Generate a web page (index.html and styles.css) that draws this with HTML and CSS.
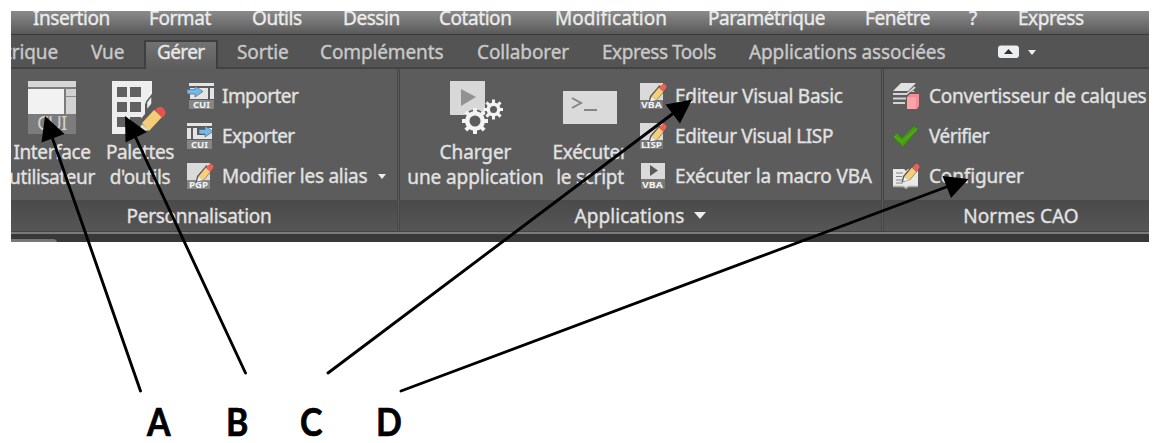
FILE: index.html
```html
<!DOCTYPE html>
<html lang="fr">
<head>
    <meta charset="UTF-8">
    <meta name="viewport" content="width=device-width, initial-scale=1.0">
    <title>Onglet Gérer</title>
    <link rel="stylesheet" href="styles.css">
</head>
<body>
    <svg class="defs" width="0" height="0">
        <defs>
            <!-- Pencil shared by the edit icons -->
            <g id="pencil">
                <path d="M10 14 L19.500 3 L25 8.500 L17 18 L8.500 20.500 Z" fill="#5c5c5c"/>
                <path d="M11.500 14.500 L19 5.500 L23.500 9.500 L16.500 18 Z" fill="#f7cf77"/>
                <path d="M11.500 14.500 L16.500 18 L10 19.500 Z" fill="#eee"/>
                <path d="M19 6 L22 2.500 Q23.500 1 25.500 2.800 Q27.500 4.500 26 6.300 L23 9.800 Z" fill="#ea6257"/>
            </g>
            <path id="bigTeeth" d="M-2 -13h4v26h-4zM-13 -2h26v4h-26z"/>
            <path id="smallTeeth" d="M-1.500 -10h3v20h-3zM-10 -1.500h20v3h-20z"/>
        </defs>
    </svg>
    <div class="app">
        <nav class="menu">
            <span>Insertion</span>
            <span>Format</span>
            <span>Outils</span>
            <span>Dessin</span>
            <span>Cotation</span>
            <span class="wide">Modification</span>
            <span>Paramétrique</span>
            <span>Fenêtre</span>
            <span>?</span>
            <span>Express</span>
        </nav>
        <div class="tabs">
            <span class="tab cut">trique</span>
            <span class="tab">Vue</span>
            <span class="tab active">Gérer</span>
            <span class="tab">Sortie</span>
            <span class="tab">Compléments</span>
            <span class="tab">Collaborer</span>
            <span class="tab tight">Express Tools</span>
            <span class="tab">Applications associées</span>
            <span class="tab-toggle">
                <svg width="44" height="16" viewBox="0 0 44 16">
                    <rect x="1" y="1.500" width="21" height="12.500" rx="3" fill="#eceef2"/>
                    <path d="M7 10 L11.500 5 L16 10 Z" fill="#333"/>
                    <path d="M31 6 H39 L35 11 Z" fill="#eee"/>
                </svg>
            </span>
        </div>
        <div class="ribbon">
            <section class="panel custom">
                <div class="panel-body">
                    <div class="big interface">
                        <svg width="50" height="56" viewBox="0 0 50 56">
                            <rect x="1" y="1" width="48" height="53" fill="#7c7c7c"/>
                            <rect x="1" y="1" width="48" height="6" fill="#d6d6d6"/>
                            <rect x="1" y="9" width="36" height="25" fill="#f2f2f2"/>
                            <rect x="39" y="9" width="10" height="25" fill="#d2d2d2"/>
                            <rect x="39" y="16" width="10" height="1" fill="#8a8a8a"/>
                            <text x="10" y="50" class="cui-label" textLength="30">CUI</text>
                        </svg>
                        <p>Interface<br>utilisateur</p>
                    </div>
                    <div class="big palettes">
                        <svg width="56" height="56" viewBox="0 0 56 56">
                            <path d="M1 1 H41 V16 L34 24 V34 L28 41 V54 H1 Z" fill="#eee"/>
                            <g fill="#606060">
                                <rect x="6" y="7" width="10" height="10"/>
                                <rect x="19" y="7" width="11" height="10"/>
                                <rect x="6" y="22" width="10" height="10"/>
                                <rect x="19" y="22" width="11" height="10"/>
                                <rect x="6" y="37" width="10" height="10"/>
                                <rect x="19" y="37" width="11" height="10"/>
                            </g>
                            <path d="M35.500 22 L41 15 V24 L35.500 31 Z" fill="#eee" stroke="#5c5c5c" stroke-width="1.500"/>
                            <path d="M26 53 L31 44 L38 50 Z" fill="#ddd"/>
                            <path d="M31 43 L43 30 L51 37 L38 51 Z" fill="#f3cd78"/>
                            <path d="M44 30 L46 28 Q50 25 53 29 Q56 33 53 36 L51 38 Z" fill="#e2564f"/>
                        </svg>
                        <p>Palettes<br>d'outils</p>
                    </div>
                    <ul class="list">
                        <li>
                            <svg width="28" height="28" viewBox="0 0 28 28">
                                <path d="M2 1h25v3h-25zM23 6h4v11h-4zM3 6h18v11h-18z" fill="#e4e4e4"/>
                                <rect x="2" y="18" width="25" height="9" fill="#858585"/>
                                <path d="M0 7.500 H8 V4 L16 9.500 L8 15 V12 H0 Z" fill="#6fb9ee" stroke="#4e5b66" stroke-width=".6"/>
                                <text x="6" y="26" class="tag" textLength="17" lengthAdjust="spacingAndGlyphs">CUI</text>
                            </svg>
                            <span class="tighter">Importer</span>
                        </li>
                        <li>
                            <svg width="28" height="28" viewBox="0 0 28 28">
                                <path d="M0 1h25v3h-25zM0 6h4v11h-4zM6 6h4v7h15v4h-19z" fill="#e4e4e4"/>
                                <path d="M20 6h5v10h-5z" fill="#e4e4e4"/>
                                <rect x="0" y="18" width="25" height="9" fill="#858585"/>
                                <path d="M12 7.500 H18 V4 L26 9.500 L18 15 V12 H12 Z" fill="#6fb9ee" stroke="#4e5b66" stroke-width=".6"/>
                                <text x="4" y="26" class="tag" textLength="17" lengthAdjust="spacingAndGlyphs">CUI</text>
                            </svg>
                            <span class="tighter">Exporter</span>
                        </li>
                        <li>
                            <svg width="28" height="28" viewBox="0 0 28 28">
                                <rect x="0" y="1" width="23" height="17" fill="#dadada"/>
                                <rect x="0" y="18" width="23" height="9" fill="#858585"/>
                                <use href="#pencil"/>
                                <text x="2" y="26" class="tag" textLength="19" lengthAdjust="spacingAndGlyphs">PGP</text>
                            </svg>
                            <span>Modifier les alias</span>
                            <i class="caret"></i>
                        </li>
                    </ul>
                </div>
                <div class="panel-title"><span>Personnalisation</span></div>
            </section>
            <section class="panel apps">
                <div class="panel-body">
                    <div class="big load">
                        <svg width="54" height="56" viewBox="0 0 54 56">
                            <rect x="1" y="1" width="35" height="34" fill="#d8d8d8"/>
                            <path d="M12 9 L27 17 L12 26 Z" fill="#929292"/>
                            <circle cx="26" cy="41" r="11.500" fill="#5c5c5c"/>
                            <g transform="translate(26 41)" fill="#f3f3f3">
                                <use href="#bigTeeth"/>
                                <use href="#bigTeeth" transform="rotate(45)"/>
                                <circle r="10"/>
                                <circle r="5.500" fill="#5c5c5c"/>
                            </g>
                            <g transform="translate(44.500 29.500)" fill="#f3f3f3">
                                <use href="#smallTeeth"/>
                                <use href="#smallTeeth" transform="rotate(45)"/>
                                <circle r="7"/>
                                <circle r="3.500" fill="#5c5c5c"/>
                            </g>
                        </svg>
                        <p>Charger<br>une application</p>
                    </div>
                    <div class="big script">
                        <svg width="54" height="56" viewBox="0 0 54 56">
                            <rect x="0" y="11" width="54" height="33" fill="#dadada"/>
                            <path d="M9 18 L18 23 L9 28 M21 30 H34" fill="none" stroke="#858585" stroke-width="2"/>
                        </svg>
                        <p>Exécuter<br>le script</p>
                    </div>
                    <ul class="list">
                        <li>
                            <svg width="28" height="28" viewBox="0 0 28 28">
                                <rect x="0" y="1" width="23" height="17" fill="#dadada"/>
                                <rect x="0" y="18" width="23" height="9" fill="#777"/>
                                <use href="#pencil"/>
                                <text x="1" y="26" class="tag" textLength="21" lengthAdjust="spacingAndGlyphs">VBA</text>
                            </svg>
                            <span>Editeur Visual Basic</span>
                        </li>
                        <li>
                            <svg width="28" height="28" viewBox="0 0 28 28">
                                <rect x="0" y="1" width="23" height="17" fill="#dadada"/>
                                <rect x="0" y="18" width="23" height="9" fill="#777"/>
                                <use href="#pencil"/>
                                <text x="1" y="26" class="tag" textLength="21" lengthAdjust="spacingAndGlyphs">LISP</text>
                            </svg>
                            <span class="tight">Editeur Visual LISP</span>
                        </li>
                        <li>
                            <svg width="28" height="28" viewBox="0 0 28 28">
                                <rect x="1" y="1" width="24" height="16" fill="#dadada"/>
                                <rect x="1" y="17" width="24" height="10" fill="#777"/>
                                <path d="M10 3 L18 8.500 L10 14 Z" fill="#5a5a5a"/>
                                <text x="2" y="26" class="tag" textLength="21" lengthAdjust="spacingAndGlyphs">VBA</text>
                            </svg>
                            <span class="loose">Exécuter la macro VBA</span>
                        </li>
                    </ul>
                </div>
                <div class="panel-title"><span class="wide">Applications</span><i class="caret large"></i></div>
            </section>
            <section class="panel norms">
                <div class="panel-body">
                    <ul class="list">
                        <li>
                            <svg width="28" height="28" viewBox="0 0 28 28">
                                <path d="M8 1 H23 L15 9 H0 Z" fill="#e2e2e2"/>
                                <path d="M0 12 H14 L22 5 M0 16.500 H13 L21 9 M0 21 H12" fill="none" stroke="#d4d4d4" stroke-width="2"/>
                                <path d="M13 14 L17 10 H27 V23 L24 27 H13 Z" fill="#5c5c5c"/>
                                <path d="M14 15 L17 12 H26 V24 L24 27 H14 Z" fill="#f48d93"/>
                                <rect x="14" y="15" width="9" height="12" fill="#fba4a8"/>
                            </svg>
                            <span>Convertisseur de calques</span>
                        </li>
                        <li>
                            <svg width="28" height="28" viewBox="0 0 28 28">
                                <path d="M0 15 L4 11 L9 16 L21 4 L25 7 L10 25 Z" fill="#459b12" stroke="#377a14" stroke-width=".7"/>
                                <path d="M2 14.500 L9 20 L24 7" fill="none" stroke="#55ac1c" stroke-width="1.500"/>
                            </svg>
                            <span class="tighter">Vérifier</span>
                        </li>
                        <li>
                            <svg width="28" height="28" viewBox="0 0 28 28">
                                <path d="M0 7 H11 L13 9 L15 7 H25 V25 H15 L13 27 L11 25 H0 Z" fill="#e9e9e9"/>
                                <path d="M3 11h7M3 14.500h6M3 18h6M3 21h7" stroke="#858585" stroke-width="1.200"/>
                                <path d="M0 24.500 H10 L13 26 L16 24.500 H25" fill="none" stroke="#aaa" stroke-width="1.500"/>
                                <use href="#pencil"/>
                            </svg>
                            <span class="loose">Configurer</span>
                        </li>
                    </ul>
                </div>
                <div class="panel-title"><span class="wide">Normes CAO</span></div>
            </section>
        </div>
        <div class="footer"><div class="file-tab"></div></div>
    </div>

    <div class="letters">
        <span>A</span>
        <span>B</span>
        <span>C</span>
        <span>D</span>
    </div>

    <!-- Arrows from the letters to the commands -->
    <svg class="arrows" width="1160" height="443" viewBox="0 0 1160 443">
        <g stroke="#000" stroke-width="2.900" stroke-linecap="round">
            <path d="M140.500 391 L52 137"/>
            <path d="M245.500 373 L135 136"/>
            <path d="M328 373 L675 112"/>
            <path d="M401 391 L949 186"/>
        </g>
        <path d="M45 116 L64.500 134 L41.500 142.500 Z"/>
        <path d="M125 116 L147 132 L125.500 142.500 Z"/>
        <path d="M692 99.500 L680 123.500 L665.500 104.500 Z"/>
        <path d="M968.500 179 L951 198 L942.500 176 Z"/>
    </svg>
</body>
</html>
```

FILE: styles.css
```css
* {
    box-sizing: border-box;
}
body {
    margin: 0;
    padding: 11px 11px 0;
    width: 1160px;
    height: 443px;
    background: #fff;
    font-family: "Noto Sans", "Open Sans", sans-serif;
    font-size: 19px;
    letter-spacing: -0.27px;
    color: #e2e2e2;
    overflow: hidden;
    position: relative;
}
.defs {
    display: none;
}
.app {
    width: 1138px;
    height: 231px;
    background: #5c5c5c;
    overflow: hidden;
    -webkit-text-stroke: 0.35px;
}

/* Letter spacing variants */
.tighter {
    letter-spacing: -0.55px;
}
.tight {
    letter-spacing: -0.38px;
}
.loose {
    letter-spacing: -0.15px;
}

/* Menu bar, its top is cut off */
.menu {
    display: grid;
    grid-template-columns: 116px 103px 91px 96px 116px 153px 157px 104px 49px 80px;
    height: 24px;
    padding-left: 22px;
    line-height: 14px;
    letter-spacing: -0.45px;
    white-space: nowrap;
    color: #ececec;
    background: linear-gradient(#8b8b8b, #5a5a5a);
    border-bottom: 1px solid #393939;
    overflow: hidden;
}
.wide {
    letter-spacing: 0.05px;
}

/* Tabs */
.tabs {
    display: grid;
    grid-template-columns: 66px 67px 79px 83px 157px 125px 147px 262px 60px;
    height: 34px;
    padding-top: 5px;
    line-height: 25px;
    letter-spacing: -0.12px;
    white-space: nowrap;
    color: #c9c9c9;
    background: #545454;
    border-bottom: 2px solid #424242;
}
.tab {
    padding-left: 14px;
}
.tab.tight {
    letter-spacing: -0.45px;
}
.tab.cut {
    padding: 0;
    margin-left: -6px;
}
.tab.active {
    width: 74px;
    height: 29px;
    padding-left: 11px;
    letter-spacing: -0.6px;
    color: #e8e8e8;
    background: linear-gradient(#727272, #5c5c5c);
    border: 2px solid #3f3f3f;
    border-width: 2px 2px 0;
    line-height: 21px;
}
.tab-toggle {
    display: flex;
    align-items: flex-start;
    padding-top: 4px;
}

/* Ribbon panels */
.ribbon {
    display: flex;
    height: 162px;
}
.panel {
    display: flex;
    flex-direction: column;
    border-right: 3px double #454545;
}
.custom {
    width: 389px;
}
.apps {
    width: 484px;
}
.norms {
    width: 265px;
    border-right: none;
}
.norms .panel-body {
    padding-left: 9px;
}
.panel-body {
    display: flex;
    height: 131px;
}
.panel-title {
    height: 31px;
    display: flex;
    justify-content: center;
    align-items: center;
    background: linear-gradient(#4a4a4a, #565656);
}
.custom .panel-title {
    padding-right: 10px;
}
.norms .panel-title {
    padding-left: 9px;
}
.big {
    display: flex;
    flex-direction: column;
    align-items: center;
    flex: none;
    padding-top: 11px;
    text-align: center;
    white-space: nowrap;
}
.big p {
    margin: 4px 0 0;
    line-height: 25px;
}
.interface {
    width: 88px;
    margin-left: -3px;
    letter-spacing: -0.4px;
}
.palettes {
    width: 87px;
    margin-left: 4px;
    padding-right: 9px;
    letter-spacing: -0.4px;
}
.palettes p {
    padding-left: 2px;
}
.load {
    width: 151px;
    letter-spacing: -0.08px;
}
.script {
    width: 89px;
    padding-right: 11px;
}
.list {
    list-style: none;
    margin: 0;
    padding: 7px 0 0;
}
.list li {
    display: flex;
    align-items: center;
    gap: 7px;
    height: 40px;
    line-height: 26px;
    white-space: nowrap;
}
.list li span {
    margin-top: -1px;
}
.norms .list li {
    gap: 8px;
}
.caret {
    margin-left: 4px;
    border: 4px solid transparent;
    border-top: 5px solid #eee;
    border-bottom: none;
}
.caret.large {
    border-width: 6px 6px 0;
    border-top-width: 7px;
    margin-left: 10px;
}
.cui-label {
    font: 19px "Noto Sans", sans-serif;
    fill: #cfcfcf;
}
.tag {
    font: bold 9px "Noto Sans", sans-serif;
    letter-spacing: 0;
    fill: #f4f4f4;
}

/* Bottom edge of the ribbon */
.footer {
    height: 11px;
    padding-top: 8px;
    background: linear-gradient(#444 1px, #7a7a7a 1px 3px, #383838 3px);
}
.file-tab {
    width: 46px;
    height: 4px;
    background: #777;
    border-radius: 0 4px 0 0;
}

/* Letters under the ribbon */
.letters {
    display: grid;
    grid-template-columns: 79px 74px 76px 40px;
    padding: 156px 0 0 136px;
    font: bold 39px/46px Lato, sans-serif;
    letter-spacing: 0;
    color: #000;
    -webkit-text-stroke: 0.7px;
}
.letters span {
    transform: scaleX(0.87);
    transform-origin: left;
}
.arrows {
    position: absolute;
    left: 0;
    top: 0;
}
```
